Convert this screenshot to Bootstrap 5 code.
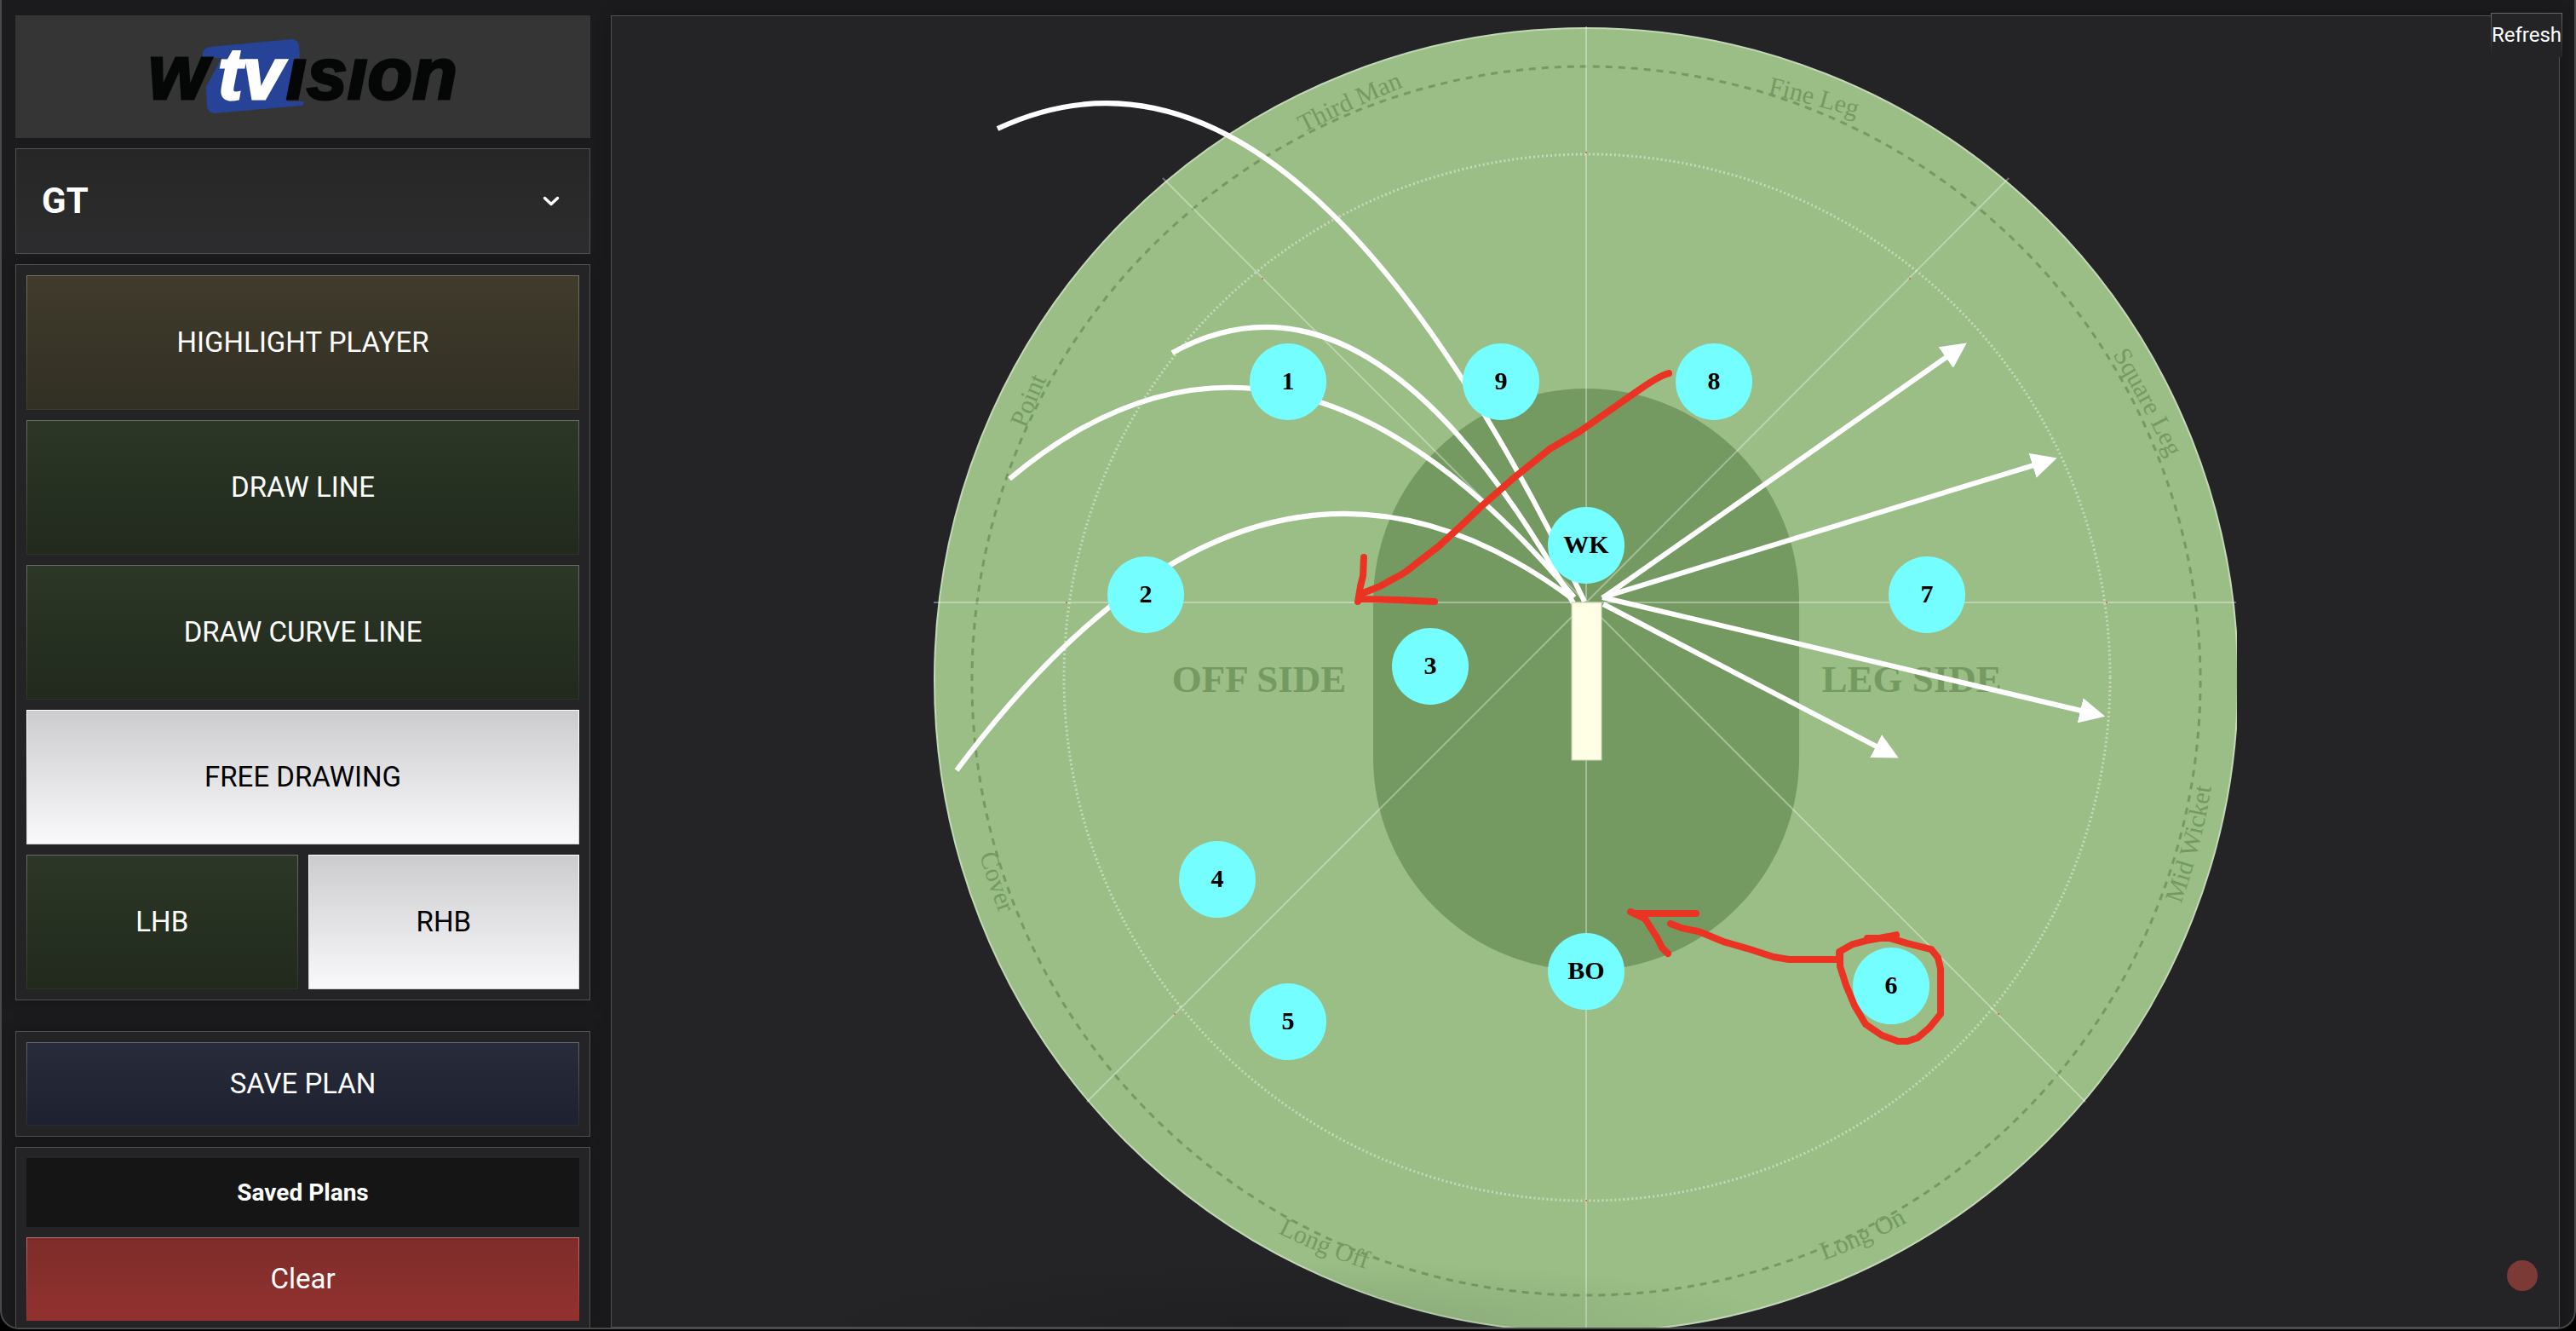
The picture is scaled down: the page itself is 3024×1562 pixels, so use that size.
<!DOCTYPE html>
<html lang="en" data-bs-theme="dark">
<head>
<meta charset="utf-8">
<meta name="viewport" content="width=device-width, initial-scale=1">
<title>wTVision – Field Planner</title>
<link href="https://cdn.jsdelivr.net/npm/bootstrap@5.3.0/dist/css/bootstrap.min.css" rel="stylesheet">
<script src="https://cdn.jsdelivr.net/npm/bootstrap@5.3.0/dist/js/bootstrap.bundle.min.js"></script>
<style>
  body { background: #000; font-family: Roboto, "Liberation Sans", sans-serif; overflow: hidden; }
  .app-window {
    height: calc(100vh - 2px); background: #1b1b1d; color: #fff;
    border: 2px solid #4a4a4c; border-top: 0; border-radius: 0 0 22px 22px;
    padding: 18px 17px 0 16px; gap: 24px;
  }
  .app-window::after {
    content: ""; position: absolute; left: 30%; right: 30%; bottom: 0; height: 80px; pointer-events: none;
    background: radial-gradient(ellipse at 50% 100%, rgba(0,0,0,.12), transparent 70%);
  }
  .side-col { flex: 0 0 22.6%; gap: 12px; }
  .field-col { flex: 1 1 0; min-width: 0; }
  .brand-box { background: #353535; height: 144px; }
  .panel-box { background: #242427; border: 1px solid #505053; padding: 12px; gap: 12px; box-shadow: 0 0 16px rgba(0,0,0,.25); }
  .team-select {
    height: 124px; padding: 0 30px; border-radius: 0; border: 1px solid #505053; color: #fff;
    font-size: 42px; font-weight: 700; line-height: 48px;
    background: url("data:image/svg+xml,%3Csvg xmlns='http://www.w3.org/2000/svg' viewBox='0 0 20 12'%3E%3Cpath d='M2.5 2.5 10 9.5 17.5 2.5' fill='none' stroke='%23fff' stroke-width='3.5' stroke-linecap='round' stroke-linejoin='round'/%3E%3C/svg%3E") no-repeat right 35px center / 20px 12px,
      linear-gradient(#262626, #2d2d2f);
  }
  .tool-btn {
    --top: #2c3728; --end: #212a1c; --edge: #667062; --foot: #2b3725;
    height: 158px; border: 1px solid transparent; border-radius: 0; color: #fff;
    font-size: 33px; line-height: 40px; padding: 0;
    background: linear-gradient(var(--top), var(--end)) padding-box, linear-gradient(var(--edge), var(--foot)) border-box;
  }
  .tool-btn:hover, .tool-btn:active { color: inherit; }
  .tool-gold { --top: #403b2b; --end: #322f24; --edge: #757062; --foot: #413b29; }
  .tool-on { --top: #ccccce; --end: #f9f9fb; --edge: #fff; --foot: #d2d2d3; color: #000; }
  .tool-blue { --top: #282b39; --end: #1e2130; --edge: #62646e; --foot: #272a38; height: 98px; }
  .tool-red { --top: #7d2c2a; --end: #92322f; --edge: #b9706d; --foot: #8c302d; height: 98px; }
  .plans-title { background: #151515; height: 81px; font-size: 28px; line-height: 36px; font-weight: 700; margin: 0; }
  .field-svg { width: 67.6%; height: auto; }
  .refresh-btn {
    position: absolute; top: 15px; right: 14px; height: 52px; padding: 0; border: 1px solid transparent; border-radius: 0;
    color: #fff; font-size: 24px; line-height: 30px;
    background: linear-gradient(#242427, #242427) padding-box, linear-gradient(#68686b, #242427) border-box;
  }
  .rec-dot { position: absolute; right: 43px; bottom: 43px; width: 36px; height: 36px; border-radius: 50%; background: #7c3a37; border: 0; padding: 0; }
  .serif-txt { font-family: "Liberation Serif", serif; }
</style>
</head>
<body>
<div class="app-window d-flex overflow-hidden position-relative">
  <aside class="side-col d-flex flex-column">
    <div class="brand-box d-flex justify-content-center align-items-center flex-shrink-0">
      <svg width="400" height="144" viewBox="156 18 400 144" role="img" aria-label="wTVision">
        <path d="M238 68V63Q239 56 247 55L343 46Q350 46 351 54L352 68H347L337 119H357Q357 123 353 124L252 133Q244 132 243 125L242 102L260 68Z" fill="#274397"/>
        <g font-family="Liberation Sans, Arial, sans-serif" font-weight="700" font-style="italic" font-size="86" stroke-width="3">
          <text x="174" y="116" fill="#050706" stroke="#050706" font-size="90">w</text>
          <text x="256" y="116" fill="#fff" stroke="#fff">tv</text>
          <text x="336" y="116" fill="#050706" stroke="#050706">ısıon</text>
        </g>
      </svg>
    </div>
    <select class="form-select team-select flex-shrink-0" aria-label="Team"><option>GT</option></select>
    <div class="panel-box d-flex flex-column">
      <button type="button" class="btn tool-btn tool-gold w-100">HIGHLIGHT PLAYER</button>
      <button type="button" class="btn tool-btn w-100">DRAW LINE</button>
      <button type="button" class="btn tool-btn w-100">DRAW CURVE LINE</button>
      <button type="button" class="btn tool-btn tool-on w-100">FREE DRAWING</button>
      <div class="d-flex" style="gap:12px">
        <button type="button" class="btn tool-btn flex-fill w-50">LHB</button>
        <button type="button" class="btn tool-btn tool-on flex-fill w-50">RHB</button>
      </div>
    </div>
    <div class="panel-box mt-4">
      <button type="button" class="btn tool-btn tool-blue w-100">SAVE PLAN</button>
    </div>
    <div class="panel-box d-flex flex-column">
      <h2 class="plans-title d-flex align-items-center justify-content-center">Saved Plans</h2>
      <button type="button" class="btn tool-btn tool-red w-100">Clear</button>
    </div>
  </aside>

  <main class="field-col panel-box text-center">
    <svg class="field-svg" viewBox="1097 31 1529 1532" role="img" aria-label="Cricket field plan">
      <defs>
        <marker id="tip" markerUnits="userSpaceOnUse" markerWidth="30" markerHeight="30" refX="1" refY="15" orient="auto"><path d="M0 0L30 15L0 30Z" fill="#fff"/></marker>
        <path id="a1" d="M1531 156A1500 1500 0 0 1 1661 97"/>
        <path id="a2" d="M2076 110A1500 1500 0 0 1 2191 141"/>
        <path id="a3" d="M2481 416A1500 1500 0 0 1 2552 550"/>
        <path id="a4" d="M1205 503A1500 1500 0 0 1 1230 443"/>
        <path id="a5" d="M1151 1003A745 745 0 0 0 1182 1091"/>
        <path id="a6" d="M1501 1447A745 745 0 0 0 1617 1493"/>
        <path id="a7" d="M2142 1479A745 745 0 0 0 2251 1428"/>
        <path id="a8" d="M2561 1061A745 745 0 0 0 2599 908"/>
      </defs>
      <circle cx="1863" cy="798" r="765" fill="#9abe86" stroke="#c3d8b7" stroke-width="2"/>
      <path d="M1613 706A250 250 0 0 1 2113 706V889A250 250 0 0 1 1613 889Z" fill="#759a61"/>
      <circle cx="1863" cy="799" r="721" fill="none" stroke="#759a61" stroke-width="3" stroke-dasharray="8 7"/>
      <g stroke="#fff" stroke-opacity=".35" stroke-width="2">
        <path d="M1863 31V1563M1097 707H2626M1863 707L1366 209M1863 707L2359 209M1863 707L1277 1293M1863 707L2449 1293" fill="none"/>
      </g>
      <circle cx="1864" cy="795" r="614" fill="none" stroke="#fff" stroke-opacity=".45" stroke-width="3" stroke-dasharray="2 3"/>
      <g fill="#e0503f">
        <circle cx="1863" cy="179" r="1"/><circle cx="1483" cy="327" r="1"/><circle cx="2243" cy="327" r="1"/><circle cx="1253" cy="707" r="1"/>
        <circle cx="2474" cy="707" r="1"/><circle cx="1380" cy="1190" r="1"/><circle cx="2347" cy="1190" r="1"/><circle cx="1863" cy="1409" r="1"/>
      </g>
      <g class="serif-txt" fill="#759a61" font-size="30">
        <text><textPath href="#a1">Third Man</textPath></text>
        <text><textPath href="#a2">Fine Leg</textPath></text>
        <text><textPath href="#a3">Square Leg</textPath></text>
        <text><textPath href="#a4">Point</textPath></text>
        <text><textPath href="#a5">Cover</textPath></text>
        <text><textPath href="#a6">Long Off</textPath></text>
        <text><textPath href="#a7">Long On</textPath></text>
        <text><textPath href="#a8">Mid Wicket</textPath></text>
      </g>
      <g class="serif-txt" fill="#759a61" font-size="45" font-weight="700" text-anchor="middle">
        <text x="1479" y="812">OFF SIDE</text>
        <text x="2245" y="812">LEG SIDE</text>
      </g>
      <g fill="none" stroke="#fff" stroke-width="6">
        <path d="M1172 151Q1518 -11 1861 706"/>
        <path d="M1377 414Q1612 285 1848 708"/>
        <path d="M1186 562Q1507 292 1849 701"/>
        <path d="M1124 904Q1478 430 1846 702"/>
        <path d="M1882 702L2286 419" marker-end="url(#tip)"/>
        <path d="M1882 701L2388 546" marker-end="url(#tip)"/>
        <path d="M1882 701L2444 834" marker-end="url(#tip)"/>
        <path d="M1883 709L2204 876" marker-end="url(#tip)"/>
      </g>
      <rect x="1846" y="707" width="35" height="185" fill="#feffe5" stroke="#c9d2b0" stroke-width="1"/>
      <g fill="#74feff">
        <circle cx="1513" cy="448" r="45"/><circle cx="1763" cy="448" r="45"/><circle cx="2013" cy="448" r="45"/>
        <circle cx="1863" cy="640" r="45"/><circle cx="1346" cy="698" r="45"/><circle cx="2263" cy="698" r="45"/>
        <circle cx="1680" cy="782" r="45"/><circle cx="1430" cy="1032" r="45"/><circle cx="1513" cy="1199" r="45"/>
        <circle cx="1863" cy="1140" r="45"/><circle cx="2221" cy="1157" r="45"/>
      </g>
      <g class="serif-txt" fill="#000" font-size="30" font-weight="700" text-anchor="middle">
        <text x="1513" y="457">1</text><text x="1763" y="457">9</text><text x="2013" y="457">8</text>
        <text x="1863" y="649">WK</text><text x="1346" y="707">2</text><text x="2263" y="707">7</text>
        <text x="1680" y="791">3</text><text x="1430" y="1041">4</text><text x="1513" y="1208">5</text>
        <text x="1863" y="1149">BO</text><text x="2221" y="1166">6</text>
      </g>
      <g fill="none" stroke="#ea3323" stroke-width="8" stroke-linecap="round" stroke-linejoin="round">
        <path d="M1960 438Q1948 441 1923 459L1893 480L1856 506L1820 527L1779 560L1738 596L1714 619L1690 641L1664 661Q1650 673 1639 678L1621 688L1601 696"/>
        <path d="M1602 654L1601 676L1598 688L1595 706L1596 703L1640 704L1685 706"/>
        <path d="M1992 1072H1920L1915 1070L1932 1078L1946 1100L1952 1112L1959 1119"/>
        <path d="M1962 1084L1975 1089L1995 1093L2024 1105L2052 1113L2083 1123L2101 1126H2160V1117L2176 1108L2191 1104L2218 1099L2227 1097M2193 1101H2220L2240 1107L2268 1114L2276 1124L2279 1137V1190L2266 1206L2252 1218L2240 1222H2229L2210 1215L2191 1202L2178 1180L2168 1156L2161 1134V1117"/>
      </g>
    </svg>
  </main>
  <button type="button" class="btn refresh-btn">Refresh</button>
  <button type="button" class="rec-dot" aria-label="Record"></button>
</div>
</body>
</html>
